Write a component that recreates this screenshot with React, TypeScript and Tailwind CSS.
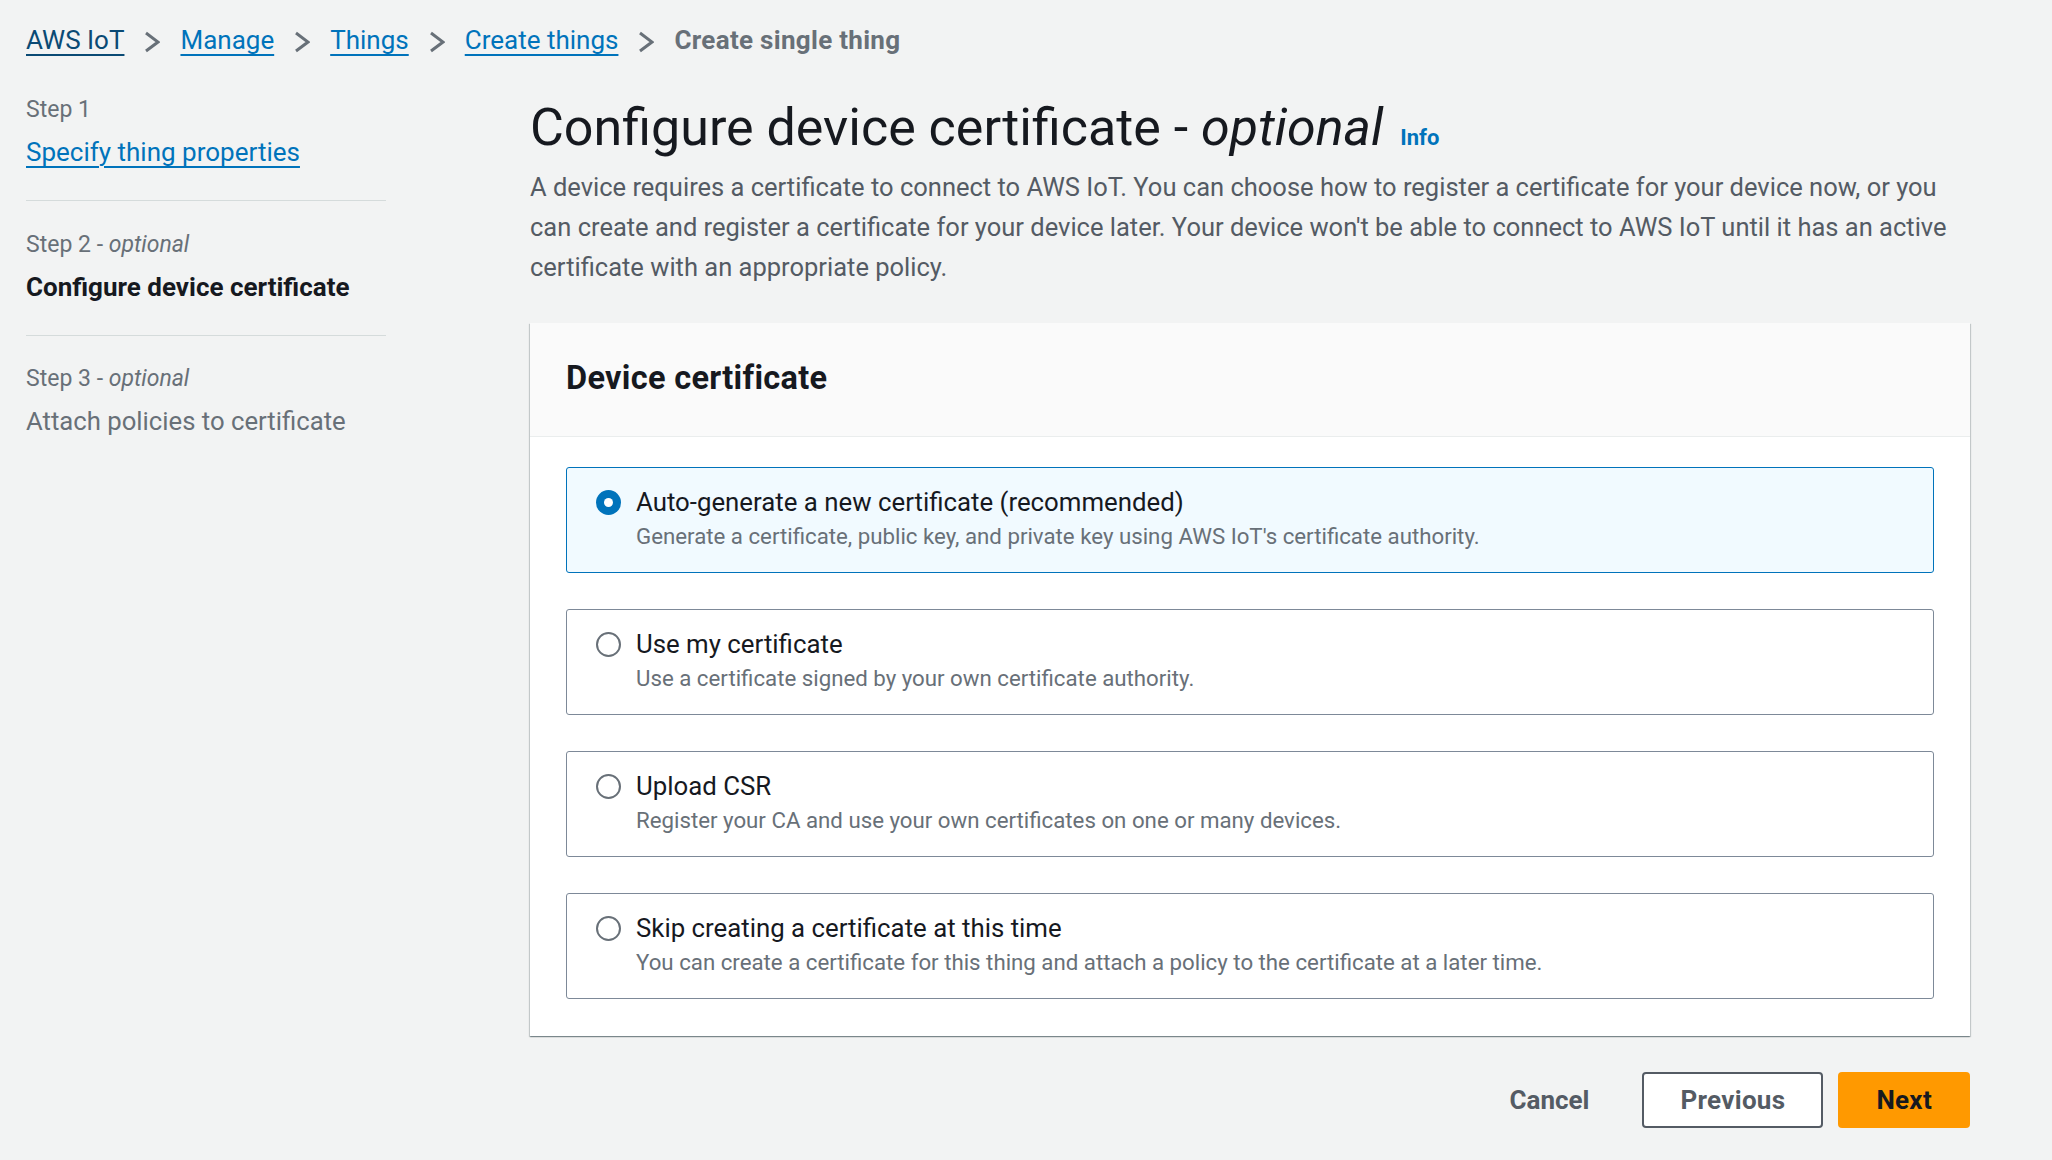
import React from "react";

function Chevron() {
  return (
    <svg width="16" height="22" viewBox="0 0 16 22" className="mx-[20px] mt-[4px] shrink-0" fill="none">
      <polyline points="2,2 14,11 2,20" stroke="#687078" strokeWidth="3" strokeLinejoin="miter" />
    </svg>
  );
}

function Radio({ checked }: { checked?: boolean }) {
  if (checked) {
    return (
      <span className="flex h-[25px] w-[25px] shrink-0 items-center justify-center rounded-full bg-[#0073bb]">
        <span className="h-[9px] w-[9px] rounded-full bg-white" />
      </span>
    );
  }
  return <span className="block h-[25px] w-[25px] shrink-0 rounded-full border-2 border-[#687078] bg-white" />;
}

const options = [
  {
    label: "Auto-generate a new certificate (recommended)",
    desc: "Generate a certificate, public key, and private key using AWS IoT's certificate authority.",
    checked: true,
  },
  {
    label: "Use my certificate",
    desc: "Use a certificate signed by your own certificate authority.",
  },
  {
    label: "Upload CSR",
    desc: "Register your CA and use your own certificates on one or many devices.",
  },
  {
    label: "Skip creating a certificate at this time",
    desc: "You can create a certificate for this thing and attach a policy to the certificate at a later time.",
  },
];

export default function App() {
  return (
    <div className="min-h-screen w-full bg-[#f2f3f3] font-['Roboto',sans-serif] text-[#16191f]">
      {/* Breadcrumb */}
      <nav className="flex items-center pl-[26px] pt-[22px] text-[26px] leading-[36px]">
        <a className="text-[#0a4a74] underline decoration-[1.5px] underline-offset-[5px]">AWS IoT</a>
        <Chevron />
        <a className="text-[#0073bb] underline decoration-[1.5px] underline-offset-[5px]">Manage</a>
        <Chevron />
        <a className="text-[#0073bb] underline decoration-[1.5px] underline-offset-[5px]">Things</a>
        <Chevron />
        <a className="text-[#0073bb] underline decoration-[1.5px] underline-offset-[5px]">Create things</a>
        <Chevron />
        <span className="font-bold tracking-[0.3px] text-[#687078]">Create single thing</span>
      </nav>

      <div className="mt-[38px] flex pl-[26px]">
        {/* Side navigation */}
        <aside className="w-[360px] shrink-0">
          <div className="pb-[30px]">
            <div className="text-[23px] leading-[28px] text-[#687078]">Step 1</div>
            <a className="mt-[10px] block text-[26px] leading-[36px] text-[#0073bb] underline decoration-[1.5px] underline-offset-[5px]">
              Specify thing properties
            </a>
          </div>
          <div className="border-t border-[#d5dbdb] py-[30px]">
            <div className="text-[23px] leading-[28px] text-[#687078]">
              Step 2 - <i>optional</i>
            </div>
            <div className="mt-[10px] text-[26px] font-bold leading-[36px] text-[#16191f]">
              Configure device certificate
            </div>
          </div>
          <div className="border-t border-[#d5dbdb] pt-[29px]">
            <div className="text-[23px] leading-[28px] text-[#687078]">
              Step 3 - <i>optional</i>
            </div>
            <div className="mt-[10px] text-[25.7px] leading-[36px] text-[#687078]">
              Attach policies to certificate
            </div>
          </div>
        </aside>

        {/* Main */}
        <main className="ml-[144px] w-[1440px] pt-[2px]">
          <div className="flex items-baseline">
            <h1 className="text-[52px] font-normal leading-[60px] text-[#16191f]">
              Configure device certificate - <i>optional</i>
            </h1>
            <a className="ml-[17px] text-[22px] font-bold text-[#0073bb]">Info</a>
          </div>
          <p className="mt-[9px] text-[25.5px] leading-[40px] text-[#545b64]">
            A device requires a certificate to connect to AWS IoT. You can choose how to register a certificate for your
            device now, or you can create and register a certificate for your device later. Your device won't be able to
            connect to AWS IoT until it has an active certificate with an appropriate policy.
          </p>

          <section className="mt-[36px] bg-white shadow-[0_1px_1px_0_rgba(0,28,36,0.3),1px_1px_1px_0_rgba(0,28,36,0.15),-1px_1px_1px_0_rgba(0,28,36,0.15)]">
            <div className="border-b border-[#eaeded] bg-[#fafafa] px-[36px] pb-[38px] pt-[35px]">
              <h2 className="text-[32.5px] font-bold tracking-[0.3px] leading-[40px] text-[#16191f]">Device certificate</h2>
            </div>
            <div className="flex flex-col gap-[36px] px-[36px] pb-[37px] pt-[30px]">
              {options.map((o) => (
                <div
                  key={o.label}
                  className={
                    o.checked
                      ? "flex gap-[15px] rounded-[3px] border border-[#0073bb] bg-[#f1faff] pb-[20px] pl-[29px] pr-[29px] pt-[16px]"
                      : "flex gap-[15px] rounded-[3px] border border-[#7d8998] bg-white pb-[20px] pl-[29px] pr-[29px] pt-[16px]"
                  }
                >
                  <div className="flex h-[36px] items-center">
                    <Radio checked={o.checked} />
                  </div>
                  <div>
                    <div className="text-[25.8px] leading-[36px] text-[#16191f]">{o.label}</div>
                    <div className="text-[22.25px] leading-[32px] text-[#687078]">{o.desc}</div>
                  </div>
                </div>
              ))}
            </div>
          </section>

          <div className="mt-[36px] flex items-center justify-end gap-[15px]">
            <button className="h-[56px] rounded-[4px] px-[38px] text-[26px] font-bold text-[#545b64]">Cancel</button>
            <button className="h-[56px] rounded-[4px] border-2 border-[#545b64] bg-white px-[36px] text-[26px] font-bold tracking-[0.3px] text-[#545b64]">
              Previous
            </button>
            <button className="h-[56px] rounded-[4px] bg-[#ff9900] px-[38px] text-[26px] font-bold tracking-[0.3px] text-[#16191f]">
              Next
            </button>
          </div>
        </main>
      </div>
    </div>
  );
}
